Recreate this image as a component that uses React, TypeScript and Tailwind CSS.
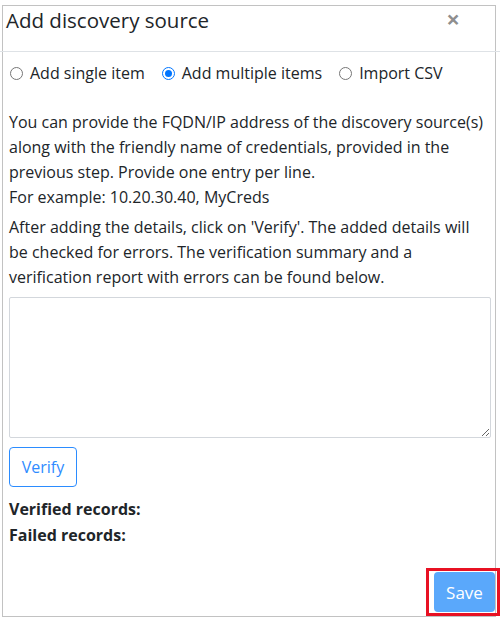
const FONT = "font-['Segoe_UI','Open_Sans',sans-serif]"

function Radio({ label, checked }: { label: string; checked?: boolean }) {
  return (
    <label className="flex items-center gap-[7px]">
      {checked ? (
        <span className="w-[13px] h-[13px] rounded-full border border-[#0075ff] flex items-center justify-center">
          <span className="w-[7px] h-[7px] rounded-full bg-[#0075ff]" />
        </span>
      ) : (
        <span className="w-[13px] h-[13px] rounded-full border border-[#767676] bg-white" />
      )}
      <span>{label}</span>
    </label>
  )
}

export default function App() {
  return (
    <div className={`w-[500px] h-[620px] bg-white text-[#212529] text-[16px] leading-[25px] ${FONT}`}>
      <div className="ml-[2px] mt-[5px] w-[494px] h-[612px] border border-[#c2c2c2] flex flex-col">
        {/* Header */}
        <div className="-ml-[3px] -mr-[5px] h-[46px] border-b border-[#dee2e6] flex justify-between pl-[6px] pr-[40px]">
          <h5 className="text-[20.5px] leading-[28px] font-normal">Add discovery source</h5>
          <span className="text-[24px] leading-[26px] font-bold text-black/45">×</span>
        </div>

        {/* Body */}
        <div className="flex-1 flex flex-col pl-[6px] pr-[4px] pt-[9px]">
          <div className="flex items-center gap-[17px] pl-[1px]">
            <Radio label="Add single item" />
            <Radio label="Add multiple items" checked />
            <Radio label="Import CSV" />
          </div>

          <p className="mt-[24px] whitespace-nowrap">
            You can provide the FQDN/IP address of the discovery source(s)
            <br />
            along with the friendly name of credentials, provided in the
            <br />
            previous step. Provide one entry per line.
            <br />
            For example: 10.20.30.40, MyCreds
          </p>
          <p className="mt-[5px] whitespace-nowrap">
            After adding the details, click on 'Verify'. The added details will
            <br />
            be checked for errors. The verification summary and a
            <br />
            verification report with errors can be found below.
          </p>

          <textarea className="mt-[7px] w-[482px] h-[141px] border border-[#d3d7dc] rounded-[2px] resize block outline-none" />

          <button className="mt-[9px] w-[68px] h-[40px] border border-[#2b8cff] rounded-[4px] text-[#2f8bff] self-start">
            Verify
          </button>

          <div className="mt-[9px] font-bold leading-[26px]">
            <div>Verified records:</div>
            <div>Failed records:</div>
          </div>

          <div className="mt-auto flex justify-end -mr-[9px]">
            <div className="border-[3px] border-[#e81123] pl-[5px] pr-[2px] py-[1px]">
              <button className="w-[61px] h-[40px] bg-[#5aa8fb] text-white text-[17px] rounded-[4px]">Save</button>
            </div>
          </div>
        </div>
      </div>
    </div>
  )
}
